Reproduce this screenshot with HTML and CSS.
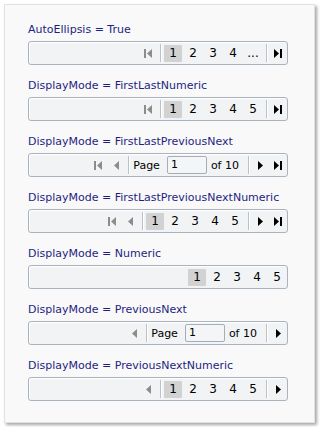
FILE: index.html
```html
<!DOCTYPE html>
<html lang="en">
<head>
  <meta charset="UTF-8" />
  <title>Pager display modes</title>
  <link rel="stylesheet" href="styles.css">
</head>
<body>
  <div class="panel">

    <div class="demo">
      <div class="caption">AutoEllipsis = True</div>
      <div class="pager">
        <span class="btn off"><svg width="9" height="9" viewBox="0 0 9 9"><rect x="0" y="0" width="2" height="9"/><path d="M8 0 L3 4.5 L8 9 Z"/></svg></span>
        <span class="sep"></span>
        <span class="num cur">1</span>
        <span class="num">2</span>
        <span class="num">3</span>
        <span class="num">4</span>
        <span class="num">...</span>
        <span class="sep"></span>
        <span class="btn"><svg width="9" height="9" viewBox="0 0 9 9"><path d="M0 0 L5 4.5 L0 9 Z"/><rect x="6" y="0" width="2" height="9"/></svg></span>
      </div>
    </div>

    <div class="demo">
      <div class="caption">DisplayMode = FirstLastNumeric</div>
      <div class="pager">
        <span class="btn off"><svg width="9" height="9" viewBox="0 0 9 9"><rect x="0" y="0" width="2" height="9"/><path d="M8 0 L3 4.5 L8 9 Z"/></svg></span>
        <span class="sep"></span>
        <span class="num cur">1</span>
        <span class="num">2</span>
        <span class="num">3</span>
        <span class="num">4</span>
        <span class="num">5</span>
        <span class="sep"></span>
        <span class="btn"><svg width="9" height="9" viewBox="0 0 9 9"><path d="M0 0 L5 4.5 L0 9 Z"/><rect x="6" y="0" width="2" height="9"/></svg></span>
      </div>
    </div>

    <div class="demo">
      <div class="caption">DisplayMode = FirstLastPreviousNext</div>
      <div class="pager">
        <span class="btn off"><svg width="9" height="9" viewBox="0 0 9 9"><rect x="0" y="0" width="2" height="9"/><path d="M8 0 L3 4.5 L8 9 Z"/></svg></span>
        <span class="btn off"><svg width="5" height="9" viewBox="0 0 5 9"><path d="M5 0 L0 4.5 L5 9 Z"/></svg></span>
        <span class="sep"></span>
        <span class="word">Page</span>
        <span class="box">1</span>
        <span class="word of">of 10</span>
        <span class="sep"></span>
        <span class="btn"><svg width="5" height="9" viewBox="0 0 5 9"><path d="M0 0 L5 4.5 L0 9 Z"/></svg></span>
        <span class="btn"><svg width="9" height="9" viewBox="0 0 9 9"><path d="M0 0 L5 4.5 L0 9 Z"/><rect x="6" y="0" width="2" height="9"/></svg></span>
      </div>
    </div>

    <div class="demo">
      <div class="caption">DisplayMode = FirstLastPreviousNextNumeric</div>
      <div class="pager">
        <span class="btn off"><svg width="9" height="9" viewBox="0 0 9 9"><rect x="0" y="0" width="2" height="9"/><path d="M8 0 L3 4.5 L8 9 Z"/></svg></span>
        <span class="btn off"><svg width="5" height="9" viewBox="0 0 5 9"><path d="M5 0 L0 4.5 L5 9 Z"/></svg></span>
        <span class="sep"></span>
        <span class="num cur">1</span>
        <span class="num">2</span>
        <span class="num">3</span>
        <span class="num">4</span>
        <span class="num">5</span>
        <span class="sep"></span>
        <span class="btn"><svg width="5" height="9" viewBox="0 0 5 9"><path d="M0 0 L5 4.5 L0 9 Z"/></svg></span>
        <span class="btn"><svg width="9" height="9" viewBox="0 0 9 9"><path d="M0 0 L5 4.5 L0 9 Z"/><rect x="6" y="0" width="2" height="9"/></svg></span>
      </div>
    </div>

    <div class="demo">
      <div class="caption">DisplayMode = Numeric</div>
      <div class="pager">
        <span class="num cur">1</span>
        <span class="num">2</span>
        <span class="num">3</span>
        <span class="num">4</span>
        <span class="num">5</span>
      </div>
    </div>

    <div class="demo">
      <div class="caption">DisplayMode = PreviousNext</div>
      <div class="pager">
        <span class="btn off"><svg width="5" height="9" viewBox="0 0 5 9"><path d="M5 0 L0 4.5 L5 9 Z"/></svg></span>
        <span class="sep"></span>
        <span class="word">Page</span>
        <span class="box">1</span>
        <span class="word of">of 10</span>
        <span class="sep"></span>
        <span class="btn"><svg width="5" height="9" viewBox="0 0 5 9"><path d="M0 0 L5 4.5 L0 9 Z"/></svg></span>
      </div>
    </div>

    <div class="demo">
      <div class="caption">DisplayMode = PreviousNextNumeric</div>
      <div class="pager">
        <span class="btn off"><svg width="5" height="9" viewBox="0 0 5 9"><path d="M5 0 L0 4.5 L5 9 Z"/></svg></span>
        <span class="sep"></span>
        <span class="num cur">1</span>
        <span class="num">2</span>
        <span class="num">3</span>
        <span class="num">4</span>
        <span class="num">5</span>
        <span class="sep"></span>
        <span class="btn"><svg width="5" height="9" viewBox="0 0 5 9"><path d="M0 0 L5 4.5 L0 9 Z"/></svg></span>
      </div>
    </div>

  </div>
</body>
</html>
```

FILE: styles.css
```css
body {
  margin: 0;
  padding: 4px;
  background: #ffffff;
  font-family: 'DejaVu Sans', Verdana, sans-serif;
  font-size: 11px;
}

.panel {
  width: 309px;
  height: 417px;
  box-sizing: content-box;
  background: #f9f9f9;
  border: 1px solid #e2e2e2;
  box-shadow: 2px 2px 3px rgba(0, 0, 0, 0.35);
  padding: 0;
}

.demo {
  margin: 0 0 14px 23px;
}

.demo:first-child {
  margin-top: 18px;
}

.caption {
  height: 14px;
  line-height: 14px;
  margin-bottom: 4px;
  color: #1e1e82;
  white-space: nowrap;
}

.pager {
  width: 258px;
  height: 22px;
  border: 1px solid #a9b3bd;
  border-radius: 3px;
  background: #f1f3f5;
  box-shadow: inset 1px 1px 0 #ffffff;
  display: flex;
  align-items: center;
  justify-content: flex-end;
  color: #000;
  font-size: 12px;
}

.btn {
  width: 18px;
  height: 18px;
  display: flex;
  align-items: center;
  justify-content: center;
  fill: #000;
}

.btn.off {
  fill: #8c8c8c;
}

.sep {
  width: 1px;
  height: 18px;
  background: #b9c1c9;
  box-shadow: 1px 0 0 #ffffff;
  margin: 0 2px 0 3px;
}

.num {
  width: 20px;
  height: 17px;
  line-height: 17px;
  text-align: center;
}

.num.cur {
  width: 18px;
  margin: 0 1px;
  background: #d2d2d2;
  border-radius: 1px;
}

.word {
  font-size: 11px;
  margin: 0 7px 0 2px;
}

.word.of {
  margin: 0 6px 0 4px;
}

.box {
  width: 35px;
  height: 16px;
  line-height: 16px;
  padding-left: 3px;
  border: 1px solid #a5aeb8;
  border-radius: 2px;
  background: #f4f5f7;
  font-size: 11px;
}
```
